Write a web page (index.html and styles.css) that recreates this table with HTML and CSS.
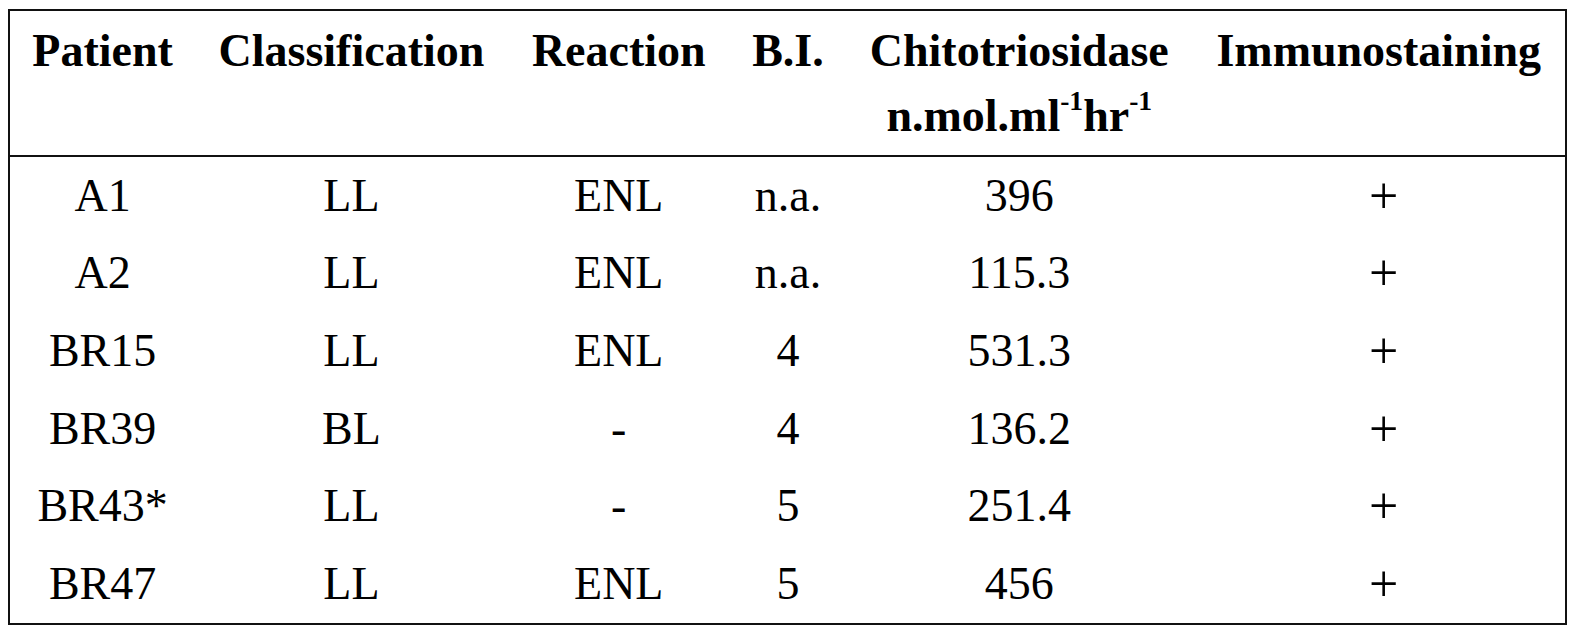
FILE: index.html
```html
<!DOCTYPE html>
<html lang="en">
<head>
<meta charset="utf-8">
<title>Patients table</title>
<link rel="stylesheet" href="styles.css">
</head>
<body>
<table class="data-table">
  <colgroup>
    <col class="c-patient">
    <col class="c-class">
    <col class="c-reaction">
    <col class="c-bi">
    <col class="c-chito">
    <col class="c-immuno">
  </colgroup>
  <thead>
    <tr>
      <th>Patient</th>
      <th>Classification</th>
      <th>Reaction</th>
      <th>B.I.</th>
      <th>Chitotriosidase<br>n.mol.ml<sup>-1</sup>hr<sup>-1</sup></th>
      <th>Immunostaining</th>
    </tr>
  </thead>
  <tbody>
    <tr><td>A1</td><td>LL</td><td>ENL</td><td>n.a.</td><td>396</td><td class="plus">+</td></tr>
    <tr><td>A2</td><td>LL</td><td>ENL</td><td>n.a.</td><td>115.3</td><td class="plus">+</td></tr>
    <tr><td>BR15</td><td>LL</td><td>ENL</td><td>4</td><td>531.3</td><td class="plus">+</td></tr>
    <tr><td>BR39</td><td>BL</td><td>-</td><td>4</td><td>136.2</td><td class="plus">+</td></tr>
    <tr><td>BR43*</td><td>LL</td><td>-</td><td>5</td><td>251.4</td><td class="plus">+</td></tr>
    <tr><td>BR47</td><td>LL</td><td>ENL</td><td>5</td><td>456</td><td class="plus">+</td></tr>
  </tbody>
</table>
</body>
</html>
```
FILE: styles.css
```css
html, body {
  margin: 0;
  padding: 0;
  background: #ffffff;
}

body {
  padding: 9px 0 0 8px;
  font-family: "Liberation Serif", "Times New Roman", serif;
  color: #000;
}

.data-table {
  border-collapse: collapse;
  table-layout: fixed;
  width: 1559px;
  border: 2px solid #111;
  font-size: 46px;
}

.c-patient { width: 186px; }
.c-class { width: 312px; }
.c-reaction { width: 222px; }
.c-bi { width: 116px; }
.c-chito { width: 346px; }
.c-immuno { width: 373px; }

.data-table th {
  font-weight: bold;
  text-align: center;
  vertical-align: top;
  line-height: 65px;
  padding: 7px 0 7px;
  border-bottom: 2px solid #111;
  white-space: nowrap;
}

.data-table th sup {
  font-size: 0.6em;
  line-height: 0;
  vertical-align: 0.75em;
}

.data-table td {
  text-align: center;
  vertical-align: middle;
  height: 77.6px;
  line-height: 60px;
  padding: 0;
  white-space: nowrap;
}

.data-table td.plus {
  font-size: 52px;
  padding: 0 0 0 10px;
}
```
